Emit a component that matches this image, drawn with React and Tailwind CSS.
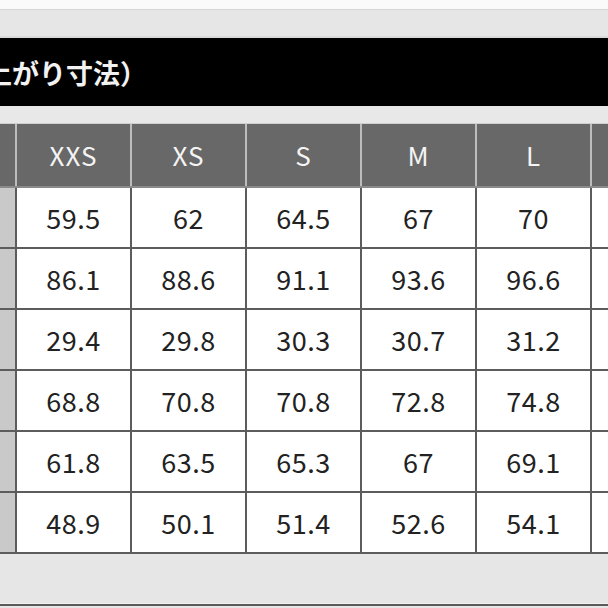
import React from "react";

const sizes = ["XXS", "XS", "S", "M", "L"];
const rows = [
  ["59.5", "62", "64.5", "67", "70"],
  ["86.1", "88.6", "91.1", "93.6", "96.6"],
  ["29.4", "29.8", "30.3", "30.7", "31.2"],
  ["68.8", "70.8", "70.8", "72.8", "74.8"],
  ["61.8", "63.5", "65.3", "67", "69.1"],
  ["48.9", "50.1", "51.4", "52.6", "54.1"],
];

const font = { fontFamily: '"Noto Sans CJK JP", "Noto Sans", sans-serif' };

export default function App() {
  return (
    <div className="w-[608px] h-[608px] overflow-hidden bg-[#e6e6e6] flex flex-col" style={font}>
      <div className="h-[10px] shrink-0 bg-[#fafafa] border-b border-[#d6d6d6]" />
      <div className="h-[28px] shrink-0 bg-[#e6e6e6] border-b-2 border-[#dadada]" />
      <div className="h-[68px] shrink-0 bg-black flex items-center overflow-hidden">
        <span className="ml-[-42px] text-[27px] font-bold text-[#f2f2f2] leading-none whitespace-nowrap">
          仕上がり寸法）
        </span>
      </div>
      <div className="h-[18px] shrink-0 bg-[#e8e8e8] border-b border-[#d0d0d0]" />
      {/* header */}
      <div className="h-[62px] shrink-0 flex gap-[2px] bg-[#bdbdbd]">
        <div className="w-[15px] bg-[#686868]" />
        {sizes.map((s) => (
          <div key={s} className="w-[113px] bg-[#686868] flex items-center justify-center text-[26px] tracking-[1px] text-[#f4f4f4] leading-none">
            {s}
          </div>
        ))}
        <div className="flex-1 bg-[#686868]" />
      </div>
      <div className="h-[2px] shrink-0 bg-[#8a8a8a]" />
      {/* body */}
      <div className="shrink-0 flex flex-col gap-[2px] bg-[#5c5c5c] border-b-2 border-[#5c5c5c]">
        {rows.map((r, i) => (
          <div key={i} className="h-[59px] flex gap-[2px]">
            <div className="w-[15px] bg-[#c9c9c9]" />
            {r.map((v, j) => (
              <div key={j} className="w-[113px] bg-white flex items-center justify-center text-[27px] tracking-[0.5px] text-[#222222] leading-none">
                {v}
              </div>
            ))}
            <div className="flex-1 bg-white" />
          </div>
        ))}
      </div>
      <div className="h-[50px] shrink-0 bg-[#e6e6e6] border-b border-[#f2f2f2]" />
      <div className="h-[2px] shrink-0 bg-[#5a5a5a]" />
      <div className="flex-1 bg-[#e6e6e6]" />
    </div>
  );
}
